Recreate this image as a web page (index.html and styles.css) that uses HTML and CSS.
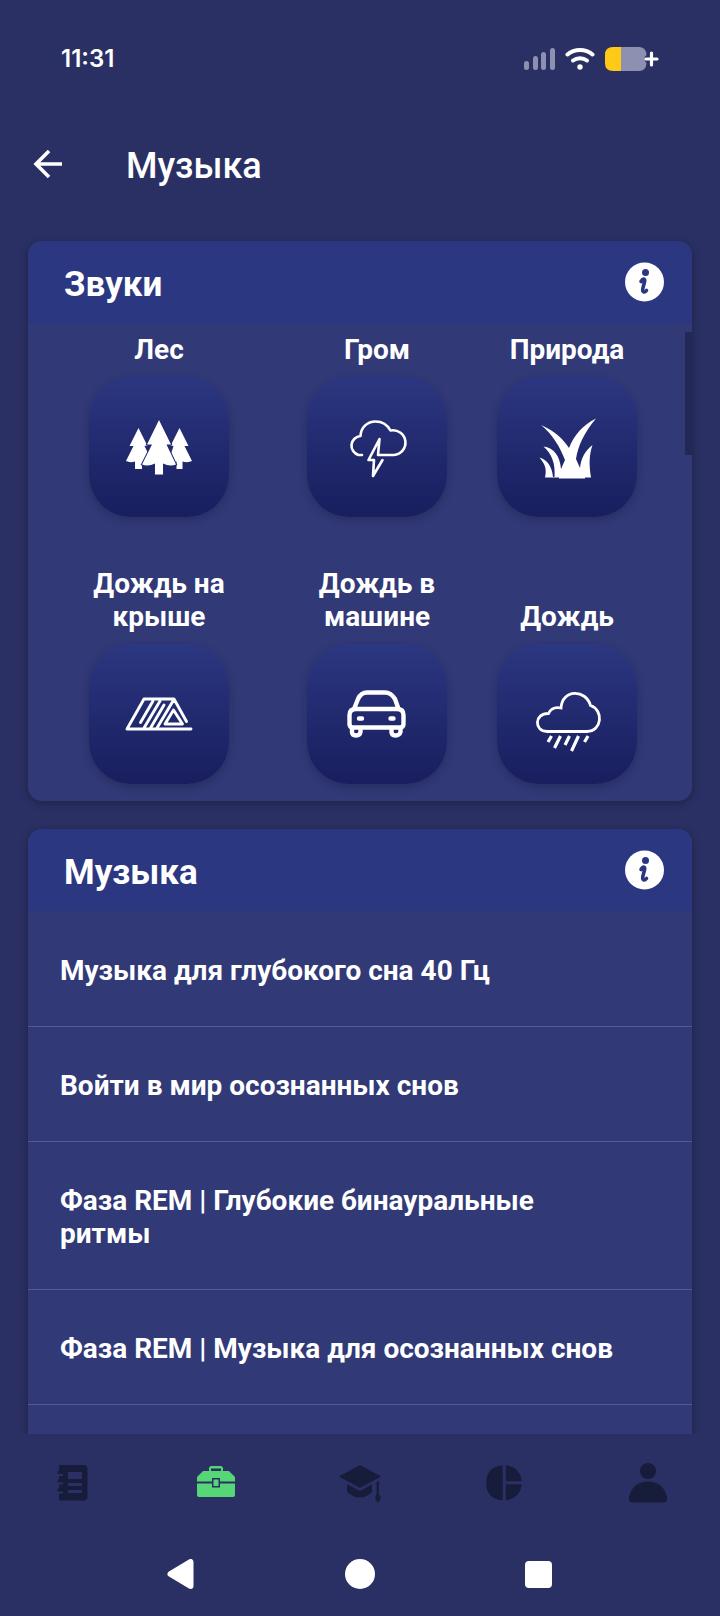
FILE: index.html
```html
<!DOCTYPE html>
<html lang="ru">
<head>
    <meta charset="UTF-8">
    <meta name="viewport" content="width=device-width, initial-scale=1.0">
    <title>Музыка</title>
    <link rel="stylesheet" href="styles.css">
</head>
<body>
    <div class="status-bar">
        <span class="time">11:31</span>
        <div class="status-icons">
            <svg width="31" height="22" viewBox="0 0 31 22" fill="#8d90b0">
                <rect x="0" y="13" width="5" height="9" rx="2.5"/>
                <rect x="9" y="8" width="5" height="14" rx="2.5"/>
                <rect x="17" y="4" width="5" height="18" rx="2.5"/>
                <rect x="26" y="0" width="5" height="22" rx="2.5"/>
            </svg>
            <svg width="30" height="22" viewBox="0 0 30 22" fill="none" stroke="#fff" stroke-width="4" stroke-linecap="round">
                <path d="M2.5 6.5C9.5 .5 20.5 .5 27.5 6.5"/>
                <path d="M8 12.5C12 9.5 18 9.5 22 12.5"/>
                <circle cx="15" cy="19" r="2.7" fill="#fff" stroke="none"/>
            </svg>
            <svg width="55" height="24" viewBox="0 0 55 24">
                <path d="M16 0H34Q41 0 41.5 8A5 5 0 0 0 41.5 16Q41 24 34 24H16Z" fill="#8d90b0"/>
                <path d="M16 0H8Q0 0 0 8V16Q0 24 8 24H16Z" fill="#ffc917"/>
                <path d="M41 12H52M46.5 6V18" stroke="#fff" stroke-width="3.2" stroke-linecap="round"/>
            </svg>
        </div>
    </div>

    <header class="app-bar">
        <button class="back-btn" aria-label="Назад">
            <svg width="30" height="30" viewBox="0 0 30 30" fill="none" stroke="#fff" stroke-width="3.6">
                <path d="M29 14H3M16 1L3 14L16 27"/>
            </svg>
        </button>
        <h1>Музыка</h1>
    </header>

    <main>
        <section class="card">
            <div class="card-header">
                <h2>Звуки</h2>
                <button class="info-btn" aria-label="О звуках">
                    <svg width="40" height="40" viewBox="0 0 40 40">
                        <circle cx="19.5" cy="20" r="19.5" fill="#fff"/>
                        <circle cx="20.5" cy="10.5" r="3.5" fill="#2c3781"/>
                        <path d="M16 19.5C18 16 20.5 16.5 19.5 20L17.8 26.5C17.2 30.5 19.5 31 21.5 28.5" fill="none" stroke="#2c3781" stroke-width="3.6" stroke-linecap="round"/>
                    </svg>
                </button>
            </div>
            <div class="sounds">
                <div class="sound">
                    <span class="sound-name" id="forest">Лес</span>
                    <button class="tile" aria-labelledby="forest">
                        <svg width="80" height="80" viewBox="0 0 80 80" fill="#fff">
                            <path d="M19.5 21L28.5 39H25.5L33 54Q29 56 23 54.5V62H16V54.5Q11 56 7 54L14.5 39H10.5Z"/>
                            <path d="M60.5 21L69.5 39H65.5L73 54Q69 56 63.5 54.5V62H57.5V54.5Q54 56 50 53L54.5 39H51.5Z"/>
                            <path d="M40 13L52 37.5H47.5L57 57.5Q51 60 44 56.5V67.5H36V56.5Q29 60 23 57.5L33 37.5H28Z" stroke="#232a70" stroke-width="2" paint-order="stroke"/>
                        </svg>
                    </button>
                </div>
                <div class="sound">
                    <span class="sound-name" id="thunder">Гром</span>
                    <button class="tile" aria-labelledby="thunder">
                        <svg width="80" height="80" viewBox="0 0 80 80" fill="none" stroke="#fff" stroke-width="2.6" stroke-linecap="round" stroke-linejoin="round">
                            <path d="M25 48H21.5A9.7 9.7 0 0 1 23.5 29C24 20 30.5 14.5 38.5 14.5C45.5 14.5 50.5 18 53.500 23.500A12.400 12.400 0 1 1 57 48H41L42.500 32L31.500 53H37L36 69L45.500 53"/>
                        </svg>
                    </button>
                </div>
                <div class="sound">
                    <span class="sound-name" id="nature">Природа</span>
                    <button class="tile" aria-labelledby="nature">
                        <svg width="80" height="80" viewBox="0 0 80 80" fill="#fff">
                            <path d="M14 18C28 24 37 33 42 41C47 28 56 18 69 11.5C57 26 51 39 49 52L53 61C54 51 58 44 65.5 38C62 48 62 58 64 70.5H58V71.5H32V70.5H18C20 62 18 57 12.5 50.5C20 53 25 59 26 70H27.5C28.5 57 25 47 16.5 39.5C27 41 33 49 34 62L38 53C33 40 26 28 14 18Z"/>
                        </svg>
                    </button>
                </div>
                <div class="sound">
                    <span class="sound-name" id="roof">Дождь на крыше</span>
                    <button class="tile" aria-labelledby="roof">
                        <svg width="80" height="80" viewBox="0 0 80 80" fill="none" stroke="#fff" stroke-width="2.9" stroke-linecap="round" stroke-linejoin="round">
                            <path d="M67.5 47.5L55 25H25L8 55H72M34 27L21.5 48.5M41 27L25 54M45 31L31.5 54M54 27L38 54M54.5 36L46 50H63.5Z"/>
                        </svg>
                    </button>
                </div>
                <div class="sound">
                    <span class="sound-name" id="car">Дождь в машине</span>
                    <button class="tile" aria-labelledby="car">
                        <svg width="80" height="80" viewBox="0 0 80 80" fill="none" stroke="#fff" stroke-width="4.4" stroke-linecap="round" stroke-linejoin="round">
                            <path d="M17 35L21 25Q24 18.5 30 18.5H48Q54 18.5 58 25L61.5 35M19 35H60Q66.5 35 66.5 41V50Q66.5 53.5 63 53.5H16Q12.5 53.5 12.5 50V41Q12.5 35 19 35Z"/>
                            <path d="M22 44.5H25M53.5 44.5H56.5"/>
                            <path d="M15 54V58Q15 61.5 19 61.5T23.5 58V54M54.5 54V58Q54.5 61.5 58.5 61.5T63.5 58V54"/>
                        </svg>
                    </button>
                </div>
                <div class="sound">
                    <span class="sound-name" id="rain">Дождь</span>
                    <button class="tile" aria-labelledby="rain">
                        <svg width="80" height="80" viewBox="0 0 80 80" fill="none" stroke="#fff" stroke-width="2.8">
                            <path d="M20 57.5C7 57.5 7 39 21.5 39.5Q25 32 34 34C35 15 59 15 63.5 31.5C77 36 75 57.5 60 57.5Z"/>
                            <path d="M24.5 62L21 68M33.5 62L27.5 74M42.5 62L38 71M51.5 62L44.5 77M61 62L57.5 68" stroke-width="3.2"/>
                        </svg>
                    </button>
                </div>
            </div>
            <div class="scroll-thumb"></div>
        </section>

        <section class="card card-music">
            <div class="card-header">
                <h2>Музыка</h2>
                <button class="info-btn" aria-label="О музыке">
                    <svg width="40" height="40" viewBox="0 0 40 40">
                        <circle cx="19.5" cy="20" r="19.5" fill="#fff"/>
                        <circle cx="20.5" cy="10.5" r="3.5" fill="#2c3781"/>
                        <path d="M16 19.5C18 16 20.5 16.5 19.5 20L17.8 26.5C17.2 30.5 19.5 31 21.5 28.5" fill="none" stroke="#2c3781" stroke-width="3.6" stroke-linecap="round"/>
                    </svg>
                </button>
            </div>
            <ul class="tracks">
                <li><a href="#">Музыка для глубокого сна 40 Гц</a></li>
                <li><a href="#">Войти в мир осознанных снов</a></li>
                <li><a href="#">Фаза REM | Глубокие бинауральные ритмы</a></li>
                <li><a href="#">Фаза REM | Музыка для осознанных снов</a></li>
            </ul>
        </section>
    </main>

    <nav class="tabs">
        <a href="#" aria-label="Дневник">
            <svg width="40" height="40" viewBox="0 0 40 40" fill="currentColor">
                <path fill-rule="evenodd" d="M7 2H32Q35.5 2 35.5 6V33.5Q35.5 37.5 32 37.5H7V30.5H11V28.5H5.5V25.5H7V21.5H11V19.5H5.5V16.5H7V13H11V11H5.5V8H7ZM16 9V16H30V9ZM16 20V23H30V20ZM16 27V30H30V27Z"/>
            </svg>
        </a>
        <a href="#" class="active" aria-label="Инструменты">
            <svg width="40" height="40" viewBox="0 0 40 40" fill="currentColor">
                <path fill-rule="evenodd" d="M13 8V5.5Q13 3 15.5 3H24.5Q27 3 27 5.5V8H33L39 14V18.5H24V15H16V18.5H1V14L7 8ZM15 8H25V5.5H15Z"/>
                <path d="M1 20.5H16V24.5H24V20.5H39V32Q39 34 37 34H3Q1 34 1 32Z"/>
                <rect x="17.5" y="16.5" width="5" height="6.5"/>
            </svg>
        </a>
        <a href="#" aria-label="Обучение">
            <svg width="44" height="40" viewBox="0 0 44 40" fill="currentColor">
                <path d="M22 2L43 13.5L22 25L1 13.5Z"/>
                <path d="M9 21L22 28L34 21.5V29Q29 34.5 22 34.5T9 29Z"/>
                <path d="M38.5 19L41 18V31L43 35L40 40L37 35L38.5 31Z"/>
            </svg>
        </a>
        <a href="#" aria-label="Статистика">
            <svg width="40" height="40" viewBox="0 0 40 40" fill="currentColor">
                <path d="M18 3V36.5Q3 35 3 20T18 3ZM22.5 3Q35 5 37 17.5H22.5ZM22.5 22H37Q35 34.5 22.5 36.5Z" stroke="currentColor" stroke-width="1.5" stroke-linejoin="round"/>
            </svg>
        </a>
        <a href="#" aria-label="Профиль">
            <svg width="40" height="40" viewBox="0 0 40 40" fill="currentColor">
                <circle cx="20" cy="8" r="8"/>
                <path d="M4.5 39.5Q0 39.5 1 34Q5 18.5 20 18.5T39 34Q40 39.5 35.5 39.5Z"/>
            </svg>
        </a>
    </nav>

    <div class="system-nav">
        <button aria-label="Назад">
            <svg width="30" height="30" viewBox="0 0 30 30" fill="#fff" stroke="#fff" stroke-width="6" stroke-linejoin="round"><path d="M4.5 15L24.5 3V27Z"/></svg>
        </button>
        <button aria-label="Домой">
            <svg width="30" height="30" viewBox="0 0 30 30" fill="#fff"><circle cx="15" cy="15" r="15"/></svg>
        </button>
        <button aria-label="Недавние">
            <svg width="30" height="30" viewBox="0 0 30 30" fill="#fff"><rect x="1" y="2" width="27" height="27" rx="4"/></svg>
        </button>
    </div>
</body>
</html>
```

FILE: styles.css
```css
* {
    box-sizing: border-box;
}

body {
    margin: 0;
    height: 100vh;
    display: flex;
    flex-direction: column;
    background: #2a3063;
    color: #fff;
    font-family: Roboto, sans-serif;
    overflow: hidden;
}

h1, h2 {
    margin: 0;
    font-size: 36px;
    line-height: 42px;
}

button {
    padding: 0;
    border: none;
    background: none;
    cursor: pointer;
}

svg {
    display: block;
}

.status-bar {
    display: flex;
    justify-content: space-between;
    align-items: center;
    height: 117px;
    padding: 0 60px 0 61px;
}

.time {
    font-family: Inter, sans-serif;
    font-size: 24px;
    font-weight: 600;
}

.status-icons {
    display: flex;
    align-items: center;
    gap: 10px;
}

.app-bar {
    display: flex;
    align-items: center;
    gap: 63px;
    height: 96px;
    padding: 0 33px;
}

.app-bar h1 {
    padding-top: 2px;
    font-weight: 500;
}

main {
    flex: 1;
    min-height: 0;
    display: flex;
    flex-direction: column;
    gap: 28px;
    padding: 28px 28px 0;
    overflow: hidden;
}

.card {
    position: relative;
    flex-shrink: 0;
    background: #313977;
    border-radius: 14px;
    box-shadow: 0 2px 8px rgba(0, 0, 0, 0.3);
}

.card-music {
    flex: 1;
    border-radius: 14px 14px 0 0;
}

.card-header {
    display: flex;
    justify-content: space-between;
    align-items: center;
    height: 82px;
    padding: 0 27px 0 36px;
    background: #2c3781;
    border-radius: 14px 14px 0 0;
}

.card-header h2 {
    padding-top: 6px;
    font-size: 35px;
}

.sounds {
    display: grid;
    grid-template-columns: 262fr 174fr 206fr;
    row-gap: 50px;
    padding: 10px 22px 17px 0;
}

.sound {
    display: flex;
    flex-direction: column;
    align-items: center;
    justify-content: flex-end;
    gap: 11px;
}

.sound-name {
    width: 140px;
    font-size: 28px;
    font-weight: 700;
    line-height: 33px;
    text-align: center;
}

.tile {
    display: flex;
    align-items: center;
    justify-content: center;
    width: 140px;
    height: 140px;
    border-radius: 42px;
    background: linear-gradient(#2c3781, #181e5e);
    box-shadow: 0 3px 10px rgba(0, 0, 0, 0.2);
}

.scroll-thumb {
    position: absolute;
    top: 91px;
    right: 0;
    width: 7px;
    height: 123px;
    background: #232858;
}

.tracks {
    margin: 0;
    padding: 1px 0 0;
    list-style: none;
}

.tracks li {
    border-bottom: 1px solid #555c8f;
}

.tracks a {
    display: block;
    padding: 42px 70px 39px 32px;
    color: #fff;
    font-size: 28px;
    font-weight: 700;
    line-height: 33px;
    text-decoration: none;
}

.tabs {
    display: grid;
    grid-template-columns: repeat(5, 1fr);
    align-items: center;
    justify-items: center;
    height: 98px;
}

.tabs a {
    color: #171c3b;
}

.tabs .active {
    color: #56d676;
}

.system-nav {
    display: grid;
    grid-template-columns: repeat(3, 1fr);
    align-items: center;
    justify-items: center;
    height: 84px;
    padding: 0 91px;
}
```
